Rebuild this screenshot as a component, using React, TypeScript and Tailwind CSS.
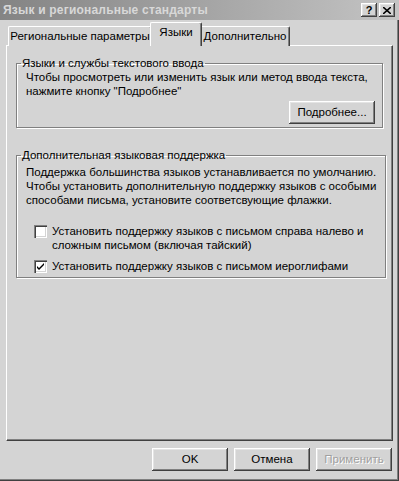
import React from 'react'

const font = { fontFamily: '"Liberation Sans", Arial, sans-serif' }

const raised =
  'bg-[#d4d4d4] shadow-[inset_-1px_-1px_0_#404040,inset_1px_1px_0_#ffffff,inset_-2px_-2px_0_#808080,inset_2px_2px_0_#e4e4e4]'

function Button({ children, disabled, className = '' }: { children: React.ReactNode; disabled?: boolean; className?: string }) {
  return (
    <button
      type="button"
      className={`${raised} h-[23px] text-[11.5px] leading-none ${disabled ? 'text-[#a0a0a0] [text-shadow:1px_1px_0_#fff]' : 'text-black'} ${className}`}
    >
      {children}
    </button>
  )
}

function Tab({ label, active, className = '' }: { label: string; active?: boolean; className?: string }) {
  return (
    <div
      className={`relative flex items-center justify-center whitespace-nowrap rounded-t-[2px] border-l border-t border-white border-r border-r-[#404040] bg-[#d4d4d4] shadow-[inset_-1px_0_0_#808080] text-[11.5px] ${
        active ? 'z-10 -mx-[2px] h-[24px] pb-[3px]' : 'h-[20px]'
      } ${className}`}
    >
      {label}
    </div>
  )
}

function Group({ title, className = '', children }: { title: string; className?: string; children: React.ReactNode }) {
  return (
    <fieldset
      className={`border border-[#808080] shadow-[1px_1px_0_#ffffff,inset_1px_1px_0_#ffffff] px-[9px] ${className}`}
    >
      <legend className="ml-[-5px] px-[1px] text-[11.5px] leading-[14px] whitespace-nowrap">{title}</legend>
      {children}
    </fieldset>
  )
}

function Check({ checked }: { checked?: boolean }) {
  return (
    <span className="mt-[1px] flex h-[13px] w-[13px] shrink-0 items-center justify-center bg-white shadow-[inset_1px_1px_0_#808080,inset_2px_2px_0_#404040,inset_-1px_-1px_0_#ffffff,inset_-2px_-2px_0_#d4d4d4]">
      {checked && (
        <svg width="9" height="9" viewBox="0 0 9 9">
          <path d="M1 4 L3 6 L8 1 V3 L3 8 L1 6 Z" fill="#000" />
        </svg>
      )}
    </span>
  )
}

export default function App() {
  return (
    <div
      style={font}
      className="relative h-[481px] w-[399px] overflow-hidden bg-[#d4d4d4] text-black shadow-[inset_-1px_-1px_0_#404040,inset_-2px_-2px_0_#808080]"
    >
      {/* title bar */}
      <div className="flex h-[20px] items-center justify-between bg-gradient-to-r from-[#848484] to-[#c4c4c4] pl-[3px] pr-[4px]">
        <span className="text-[12px] font-bold tracking-[0.2px] text-[#d8d8d8]">Язык и региональные стандарты</span>
        <div className="flex gap-[2px]">
          <span className={`${raised} flex h-[14px] w-[16px] items-center justify-center text-[11px] font-bold leading-none`}>?</span>
          <span className={`${raised} flex h-[14px] w-[16px] items-center justify-center`}>
            <svg width="8" height="7" viewBox="0 0 8 7">
              <path d="M0 0 L8 7 M8 0 L0 7" stroke="#000" strokeWidth="1.6" />
            </svg>
          </span>
        </div>
      </div>

      <div className="px-[6px] pt-[2px]">
        {/* tabs */}
        <div className="relative mb-[-1px] flex h-[24px] items-end pl-[2px]">
          <Tab label="Региональные параметры" className="w-[144px]" />
          <Tab label="Языки" active className="w-[52px]" />
          <Tab label="Дополнительно" className="w-[90px]" />
        </div>

        {/* panel */}
        <div className="h-[396px] border-l border-t border-white border-r border-b border-r-[#404040] border-b-[#404040] shadow-[inset_-1px_-1px_0_#808080] px-[9px] pt-[10px]">
          <Group title="Языки и службы текстового ввода" className="h-[72px]">
            <div className="whitespace-nowrap text-[11.5px] leading-[14px]">
              <p>Чтобы просмотреть или изменить язык или метод ввода текста,</p>
              <p>нажмите кнопку "Подробнее"</p>
            </div>
            <div className="mt-[3px] flex justify-end">
              <Button className="mr-[-2px] w-[86px]">Подробнее...</Button>
            </div>
          </Group>

          <Group title="Дополнительная языковая поддержка" className="mt-[20px] h-[130px]">
            <div className="mt-[3px] whitespace-nowrap text-[11.5px] leading-[14px]">
              <p>Поддержка большинства языков устанавливается по умолчанию.</p>
              <p>Чтобы установить дополнительную поддержку языков с особыми</p>
              <p>способами письма, установите соответсвующие флажки.</p>
            </div>
            <div className="mt-[17px] flex gap-[5px] pl-[8px] whitespace-nowrap text-[11.5px] leading-[14px]">
              <Check />
              <p>
                Установить поддержку языков с письмом справа налево и
                <br />
                сложным письмом (включая тайский)
              </p>
            </div>
            <div className="mt-[7px] flex gap-[5px] pl-[8px] whitespace-nowrap text-[11.5px] leading-[14px]">
              <Check checked />
              <p>Установить поддержку языков с письмом иероглифами</p>
            </div>
          </Group>
        </div>

        {/* bottom buttons */}
        <div className="mt-[7px] flex justify-end gap-[6px] pr-[1px]">
          <Button className="w-[76px]">OK</Button>
          <Button className="w-[76px]">Отмена</Button>
          <Button disabled className="w-[76px]">Применить</Button>
        </div>
      </div>
    </div>
  )
}
